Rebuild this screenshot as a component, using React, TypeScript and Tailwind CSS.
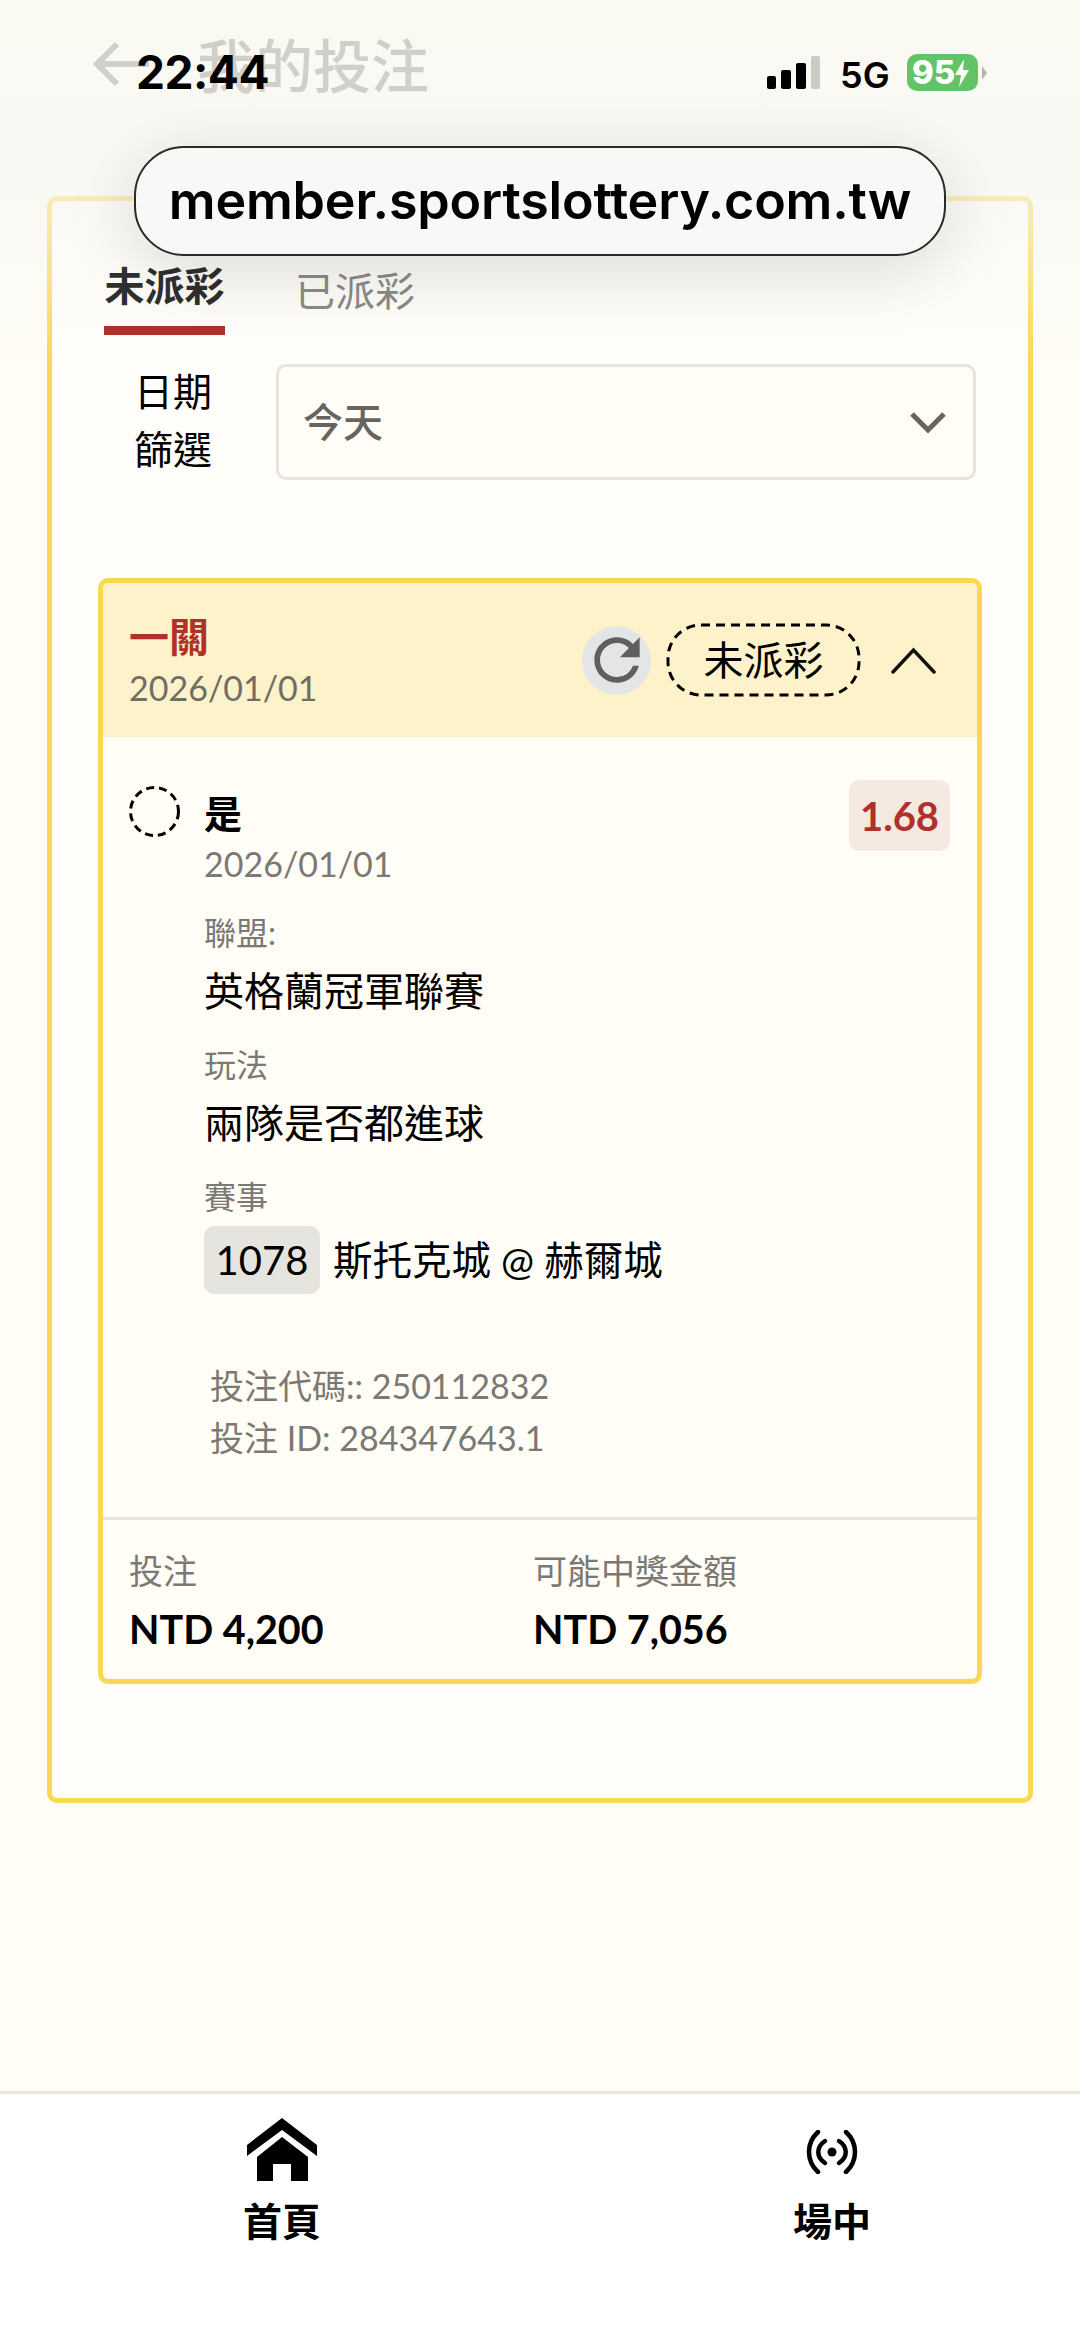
import { MdRefresh } from "react-icons/md";

const cjk = "font-['Lato','Noto_Sans_CJK_TC',sans-serif]";
const sf = "font-['Inter','Liberation_Sans',sans-serif]";

function StatusBar() {
  return (
    <div className={`absolute inset-x-0 top-0 h-[130px] z-20 ${sf}`}>
      <div className="absolute left-[136px] top-[44px] text-[46px] leading-[56px] font-bold text-black tracking-[-0.5px]">
        22:44
      </div>
      <div className="absolute left-[767px] top-[56px] flex items-end gap-[5px] h-[33px]">
        <div className="w-[9px] h-[13px] rounded-[2px] bg-black" />
        <div className="w-[10px] h-[19px] rounded-[2px] bg-black" />
        <div className="w-[10px] h-[26px] rounded-[2px] bg-black" />
        <div className="w-[9px] h-[33px] rounded-[2px] bg-[#cbcac5]" />
      </div>
      <div className="absolute left-[840px] top-[53px] text-[36px] leading-[44px] font-semibold text-black">
        5G
      </div>
      <div className="absolute left-[907px] top-[54px] w-[71px] h-[37px] rounded-[10px] bg-[#62c466] flex items-center pl-[5px] text-[33px] leading-none font-extrabold text-white">
        95
        <svg width="16" height="30" viewBox="0 0 16 30" className="ml-[-1px] shrink-0">
          <path d="M10 1 1 17h6l-2 12 10-17H9z" fill="#fff" />
        </svg>
      </div>
      <div className="absolute left-[982px] top-[66px] w-0 h-0 border-y-[7px] border-y-transparent border-l-[5px] border-l-[#b5b4af]" />
    </div>
  );
}

function Field({ label, value }: { label: string; value: string }) {
  return (
    <div className="mb-[24px]">
      <div className="text-[32px] leading-[44px] text-[#7b7973] mb-[8px]">{label}</div>
      <div className="text-[40px] leading-[56px] text-black">{value}</div>
    </div>
  );
}

function RadioIcon() {
  return (
    <svg width="54" height="44" viewBox="0 0 54 44" fill="none" stroke="#000" strokeWidth="4.5" strokeLinecap="round">
      <circle cx="27" cy="22" r="4.5" fill="#000" stroke="none" />
      <path d="M20 11c-9 6-9 16 0 22" />
      <path d="M34 11c9 6 9 16 0 22" />
      <path d="M13 2C1 13 1 31 13 42" />
      <path d="M41 2c12 11 12 29 0 40" />
    </svg>
  );
}

function HomeIcon() {
  return (
    <svg width="70" height="64" viewBox="0 0 70 64" fill="#000">
      <path d="M35 0 70 27v11L35 12 0 38V27z" />
      <path d="M35 19 61 39v24H44V46H26v17H10V39z" />
    </svg>
  );
}

export default function App() {
  return (
    <div className={`relative w-[1080px] h-[2339px] overflow-hidden flex flex-col bg-[#fffdf6] ${cjk}`}>
      <StatusBar />

      {/* blurred top of the page behind the browser bar */}
      <div className="absolute inset-x-0 top-0 h-[370px] z-[5] pointer-events-none bg-gradient-to-b from-[#faf9f2] via-[#f6f6f2b3] to-transparent" />

      <div className={`absolute left-[134px] top-[146px] z-20 w-[812px] h-[110px] rounded-[50px] border-[2px] border-[#2a2a2a] bg-[#f8f8f6] shadow-[0_14px_70px_rgba(0,0,0,0.13)] flex items-center justify-center ${sf}`}>
        <span className="text-[52px] font-semibold text-black tracking-[-0.2px]">member.sportslottery.com.tw</span>
      </div>

      <header className="relative z-[6] h-[196px] shrink-0 flex items-start pl-[93px] pt-[31px] gap-[48px] text-[#d0cfca]">
        <svg width="56" height="46" viewBox="0 0 56 46" fill="none" stroke="currentColor" strokeWidth="6" className="mt-[10px]">
          <path d="M56 23H5M24 3 4 23l20 20" />
        </svg>
        <h1 className="text-[58px] leading-[70px] font-medium">我的投注</h1>
      </header>

      <main className="mx-[47px] h-[1607px] shrink-0 rounded-[10px] border-[5px] border-[#fbd753] bg-[#fffefb] px-[46px]">
        <div className="relative z-[6] h-[134px] flex items-end gap-[70px] pl-[6px]">
          <div className="w-[121px] border-b-[9px] border-[#b0302a] pb-[15px] text-center text-[40px] leading-[50px] font-bold text-[#2f2f2f] whitespace-nowrap">
            未派彩
          </div>
          <div className="pb-[19px] text-[40px] leading-[50px] text-[#8a8a86]">已派彩</div>
        </div>

        <div className="mt-[27px] flex items-center">
          <div className="w-[120px] ml-[15px] pb-[4px] text-center text-[39px] leading-[58px] text-black">
            日期
            <br />
            篩選
          </div>
          <div className="ml-[43px] w-[700px] h-[116px] rounded-[10px] border-[3px] border-[#e6e4de] bg-[#fffdf6] flex items-center justify-between pl-[24px] pr-[27px]">
            <span className="text-[40px] font-medium text-[#666460]">今天</span>
            <svg width="36" height="22" viewBox="0 0 36 22" fill="none" stroke="#666460" strokeWidth="5">
              <path d="M2 3 18 19 34 3" />
            </svg>
          </div>
        </div>

        <section className="mt-[96px] w-[884px] h-[1106px] rounded-[10px] border-[5px] border-[#fbd753] bg-[#fffdf6] overflow-hidden flex flex-col">
          <div className="h-[154px] shrink-0 bg-[#fdf2c9] flex items-center justify-between pl-[26px] pr-[41px]">
            <div>
              <div className="text-[40px] leading-[52px] font-bold text-[#b0302a]">一關</div>
              <div className="mt-[3px] text-[34px] leading-[44px] text-[#6f6d66]">2026/01/01</div>
            </div>
            <div className="flex items-center">
              <div className="w-[69px] h-[69px] rounded-full bg-[#e4e5e7] flex items-center justify-center">
                <MdRefresh size={68} className="text-[#5f5f5f]" />
              </div>
              <div className="relative ml-[15px] w-[195px] h-[74px] flex items-center justify-center text-[40px] text-black">
                <svg width="195" height="74" viewBox="0 0 195 74" fill="none" className="absolute inset-0">
                  <rect x="2" y="2" width="191" height="70" rx="33" stroke="#000" strokeWidth="3" strokeDasharray="9 6" />
                </svg>
                未派彩
              </div>
              <svg width="45" height="27" viewBox="0 0 45 27" fill="none" stroke="#111" strokeWidth="3.5" strokeLinecap="round" className="ml-[30px]">
                <path d="M2 25 22.5 3 43 25" />
              </svg>
            </div>
          </div>

          <div className="flex-1 flex flex-col pt-[43px]">
            <div className="flex pl-[26px] pr-[27px]">
              <svg width="51" height="51" viewBox="0 0 51 51" fill="none" className="mt-[6px] shrink-0">
                <circle cx="25.5" cy="25.5" r="24" stroke="#000" strokeWidth="3" strokeDasharray="8 5" />
              </svg>
              <div className="ml-[24px] flex-1">
                <div className="text-[38px] leading-[54px] font-bold text-black mt-[6px]">是</div>
                <div className="mt-[2px] text-[34px] leading-[44px] text-[#7b7973]">2026/01/01</div>
              </div>
              <div className="w-[101px] h-[71px] rounded-[10px] bg-[#f5e9e1] flex items-center justify-center text-[40px] font-bold text-[#b0302a]">
                1.68
              </div>
            </div>

            <div className="pl-[101px] mt-[25px]">
              <Field label="聯盟:" value="英格蘭冠軍聯賽" />
              <Field label="玩法" value="兩隊是否都進球" />
              <div className="text-[32px] leading-[44px] text-[#7b7973] mt-[1px]">賽事</div>
              <div className="flex items-center gap-[13px] mt-[7px]">
                <div className="h-[68px] w-[116px] rounded-[10px] bg-[#e6e4de] flex items-center justify-center text-[40px] text-black">
                  1078
                </div>
                <div className="text-[39.5px] text-black">斯托克城 @ 赫爾城</div>
              </div>
            </div>

            <div className="pl-[107px] mt-[66px] text-[34px] leading-[52px] text-[#7b7973]">
              <div>投注代碼:: 250112832</div>
              <div>投注 ID: 284347643.1</div>
            </div>

            <div className="mt-auto h-[162px] border-t-[3px] border-[#e6e4de] grid grid-cols-[404px_1fr] pl-[26px] pt-[29px]">
              <div>
                <div className="text-[34px] leading-[44px] text-[#7b7973]">投注</div>
                <div className="mt-[10px] text-[39.5px] leading-[52px] font-bold text-black">NTD 4,200</div>
              </div>
              <div>
                <div className="text-[34px] leading-[44px] text-[#7b7973]">可能中獎金額</div>
                <div className="mt-[10px] text-[39.5px] leading-[52px] font-bold text-black">NTD 7,056</div>
              </div>
            </div>
          </div>
        </section>
      </main>

      <div className="flex-1" />

      <nav className="h-[248px] shrink-0 border-t-[3px] border-[#e6e6e6] bg-white flex pt-[24px]">
        <div className="w-[564px] flex flex-col items-center">
          <div className="h-[64px] flex items-center"><HomeIcon /></div>
          <span className="mt-[17px] text-[39px] leading-[44px] font-bold text-black">首頁</span>
        </div>
        <div className="w-[400px] ml-[68px] flex flex-col items-center">
          <div className="h-[56px] flex items-end"><RadioIcon /></div>
          <span className="mt-[25px] text-[39px] leading-[44px] font-bold text-black">場中</span>
        </div>
      </nav>
    </div>
  );
}
